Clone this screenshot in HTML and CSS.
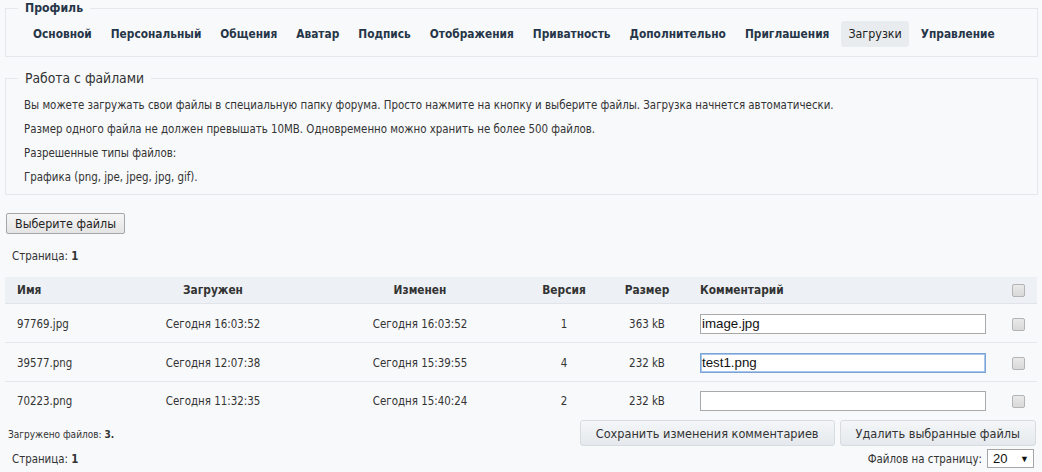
FILE: index.html
```html
<!DOCTYPE html>
<html lang="ru">
<head>
<meta charset="utf-8">
<title>Загрузки</title>
<link rel="stylesheet" href="styles.css">
</head>
<body>
<div class="page">
  <fieldset class="box profile">
    <legend class="legend-bold">Профиль</legend>
    <nav class="tabs">
      <a class="tab">Основной</a>
      <a class="tab">Персональный</a>
      <a class="tab">Общения</a>
      <a class="tab">Аватар</a>
      <a class="tab">Подпись</a>
      <a class="tab">Отображения</a>
      <a class="tab">Приватность</a>
      <a class="tab">Дополнительно</a>
      <a class="tab">Приглашения</a>
      <a class="tab active">Загрузки</a>
      <a class="tab">Управление</a>
    </nav>
  </fieldset>

  <fieldset class="box info">
    <legend class="legend-normal">Работа с файлами</legend>
    <p>Вы можете загружать свои файлы в специальную папку форума. Просто нажмите на кнопку и выберите файлы. Загрузка начнется автоматически.</p>
    <p>Размер одного файла не должен превышать 10MB. Одновременно можно хранить не более 500 файлов.</p>
    <p>Разрешенные типы файлов:</p>
    <p>Графика (png, jpe, jpeg, jpg, gif).</p>
  </fieldset>

  <div class="upload"><button class="choose">Выберите файлы</button></div>

  <div class="pager">Страница: <b>1</b></div>

  <table class="files">
    <colgroup>
      <col class="c-name"><col class="c-up"><col class="c-mod"><col class="c-ver"><col class="c-size"><col class="c-com"><col class="c-chk">
    </colgroup>
    <thead>
      <tr>
        <th class="left">Имя</th>
        <th>Загружен</th>
        <th>Изменен</th>
        <th>Версия</th>
        <th>Размер</th>
        <th class="left com">Комментарий</th>
        <th><span class="chk"></span></th>
      </tr>
    </thead>
    <tbody>
      <tr>
        <td class="left">97769.jpg</td>
        <td>Сегодня 16:03:52</td>
        <td>Сегодня 16:03:52</td>
        <td>1</td>
        <td>363 kB</td>
        <td class="left com"><span class="inp">image.jpg</span></td>
        <td><span class="chk"></span></td>
      </tr>
      <tr>
        <td class="left">39577.png</td>
        <td>Сегодня 12:07:38</td>
        <td>Сегодня 15:39:55</td>
        <td>4</td>
        <td>232 kB</td>
        <td class="left com"><span class="inp focus">test1.png</span></td>
        <td><span class="chk"></span></td>
      </tr>
      <tr class="last">
        <td class="left">70223.png</td>
        <td>Сегодня 11:32:35</td>
        <td>Сегодня 15:40:24</td>
        <td>2</td>
        <td>232 kB</td>
        <td class="left com"><span class="inp"></span></td>
        <td><span class="chk"></span></td>
      </tr>
    </tbody>
  </table>

  <div class="actions">
    <div class="count">Загружено файлов: <b>3.</b></div>
    <div class="btns">
      <button class="btn">Сохранить изменения комментариев</button>
      <button class="btn">Удалить выбранные файлы</button>
    </div>
  </div>

  <div class="bottom">
    <div class="pager2">Страница: <b>1</b></div>
    <div class="perpage">Файлов на страницу: <span class="select">20 <span class="arrow">▼</span></span></div>
  </div>
</div>
</body>
</html>
```

FILE: styles.css
```css
html, body {
  margin: 0;
  padding: 0;
  background: #f8f9fb;
}
body {
  font-family: "DejaVu Sans Condensed", "Liberation Sans", sans-serif;
  font-size: 11.4px;
  color: #333;
}
.page {
  padding: 0 4px 0 5px;
  width: 1033px;
}
.box {
  margin: 0;
  border: 1px solid #e4e7eb;
  padding: 0;
  min-width: 0;
}
.legend-bold {
  margin-left: -8px;
  padding: 0 7px;
  font-weight: bold;
  font-size: 12.2px;
  line-height: 16px;
  color: #263648;
}
.legend-normal {
  margin-left: -6px;
  padding: 0 7px;
  font-size: 13.8px;
  line-height: 16px;
  color: #333;
}
.profile {
  padding: 5px 0 9px 20px;
}
.tabs {
  display: flex;
  gap: 5px;
}
.tab {
  display: block;
  padding: 0 7px;
  height: 26px;
  line-height: 26px;
  font-weight: bold;
  font-size: 11.8px;
  color: #263648;
  border-radius: 3px;
}
.tab.active {
  background: #e9ecef;
  font-weight: normal;
  font-size: 12.4px;
  color: #222;
}
.info {
  margin-top: 13px;
  padding: 7px 0 12px 18px;
  height: 104px;
}
.info p {
  margin: 0;
  line-height: 24px;
}
.upload {
  padding-top: 18px;
}
.choose {
  font-family: "DejaVu Sans Condensed", "Liberation Sans", sans-serif;
  font-size: 12.4px;
  color: #222;
  margin: 0 0 0 1px;
  height: 21px;
  padding: 0 8px;
  border: 1px solid #a6a6a6;
  border-radius: 2px;
  background: linear-gradient(#f6f6f6, #e4e4e4);
}
.pager {
  padding: 14px 0 0 7px;
  line-height: 16px;
}
.files {
  margin-top: 13px;
  width: 1032px;
  border-collapse: collapse;
  table-layout: fixed;
}
.c-name { width: 105px; }
.c-up { width: 206px; }
.c-mod { width: 208px; }
.c-ver { width: 80px; }
.c-size { width: 86px; }
.c-com { width: 310px; }
.c-chk { width: 37px; }
.files th {
  background: #edf0f4;
  height: 26px;
  padding: 0;
  font-weight: bold;
  font-size: 11.8px;
  text-align: center;
  color: #333;
  border-bottom: 1px solid #e1e5ea;
}
.files td {
  height: 37px;
  padding: 1px 0 0;
  text-align: center;
  border-bottom: 1px solid #e4e8ed;
}
.files tr.last td {
  border-bottom: none;
  height: 36px;
}
.files .left {
  text-align: left;
  padding-left: 12px;
}
.files .com {
  padding-left: 10px;
}
.inp {
  display: block;
  box-sizing: border-box;
  width: 286px;
  height: 20px;
  border: 1px solid #a9a9a9;
  background: #fff;
  font-family: "Liberation Sans", Arial, sans-serif;
  font-size: 13.3px;
  line-height: 18px;
  padding-left: 1px;
  color: #111;
  text-align: left;
}
.inp.focus {
  border-color: #7aa3d6;
  box-shadow: 0 0 0 1px #a9c6ea inset;
}
.chk {
  display: inline-block;
  box-sizing: border-box;
  width: 13px;
  height: 13px;
  border: 1px solid #b4b4b4;
  border-radius: 2px;
  background: linear-gradient(#e9e9e9, #d9d9d9);
  vertical-align: middle;
  margin-left: -1px;
}
.actions {
  display: flex;
  justify-content: space-between;
  align-items: center;
  height: 28px;
  margin-top: 0;
}
.count {
  font-size: 10px;
  padding-left: 3px;
  margin-top: 2px;
}
.btns {
  display: flex;
  gap: 5px;
  padding-right: 2px;
}
.btn {
  font-family: "DejaVu Sans Condensed", "Liberation Sans", sans-serif;
  font-size: 12.6px;
  color: #333;
  height: 26px;
  padding: 0 15px;
  border: 1px solid #d6dce2;
  border-radius: 3px;
  background: linear-gradient(#f4f6f8, #e5e9ed);
}
.bottom {
  display: flex;
  justify-content: space-between;
  align-items: center;
  height: 21px;
  margin-top: 1px;
}
.pager2 {
  padding-left: 7px;
}
.perpage {
  display: flex;
  align-items: center;
  gap: 5px;
  padding-right: 4px;
}
.select {
  display: inline-flex;
  justify-content: space-between;
  align-items: center;
  box-sizing: border-box;
  width: 47px;
  height: 19px;
  border: 1px solid #a6a6a6;
  background: #fff;
  padding: 0 4px 0 5px;
  font-family: "Liberation Sans", Arial, sans-serif;
  font-size: 13px;
  color: #111;
}
.arrow {
  font-size: 9px;
}
```
